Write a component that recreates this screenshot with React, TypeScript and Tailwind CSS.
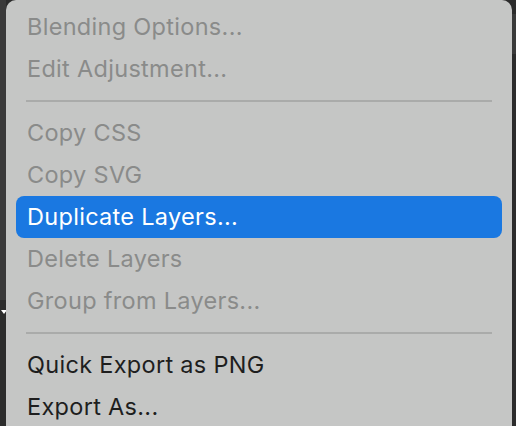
import React from "react";

type Item = { label: string; disabled?: boolean; active?: boolean } | "sep";

const items: Item[] = [
  { label: "Blending Options...", disabled: true },
  { label: "Edit Adjustment...", disabled: true },
  "sep",
  { label: "Copy CSS", disabled: true },
  { label: "Copy SVG", disabled: true },
  { label: "Duplicate Layers...", active: true },
  { label: "Delete Layers", disabled: true },
  { label: "Group from Layers...", disabled: true },
  "sep",
  { label: "Quick Export as PNG" },
  { label: "Export As..." },
];

export default function App() {
  return (
    <div
      className="relative w-[516px] h-[426px] overflow-hidden bg-[#2c2c2c]"
      style={{ fontFamily: "Inter, 'Noto Sans', sans-serif" }}
    >
      <div className="absolute left-0 top-0 w-[6px] h-[300px] bg-[#3a3a3a]" />
      <div className="absolute left-[1px] top-[310px] w-0 h-0 border-l-[3px] border-r-[3px] border-t-[4px] border-l-transparent border-r-transparent border-t-white" />
      <div className="absolute right-0 top-[14px] w-[4px] h-[40px] bg-[#3a3a3a]" />
      <div className="absolute left-[6px] top-0 w-[506px] h-[440px] bg-[#c5c6c5] rounded-[10px] px-[10px] pt-[6px]">
        {items.map((it, i) =>
          it === "sep" ? (
            <div key={i} className="h-[22px] flex items-center px-[10px]">
              <div className="h-[2px] w-full bg-[#aaabaa]" />
            </div>
          ) : (
            <div
              key={i}
              className={
                "h-[42px] flex items-center pl-[11px] rounded-[8px] text-[23.5px] tracking-[0.3px] " +
                (it.active
                  ? "bg-[#1a78e1] text-white"
                  : it.disabled
                  ? "text-[#8a8b8a]"
                  : "text-[#1e1e1e]")
              }
            >
              {it.label}
            </div>
          )
        )}
      </div>
    </div>
  );
}
